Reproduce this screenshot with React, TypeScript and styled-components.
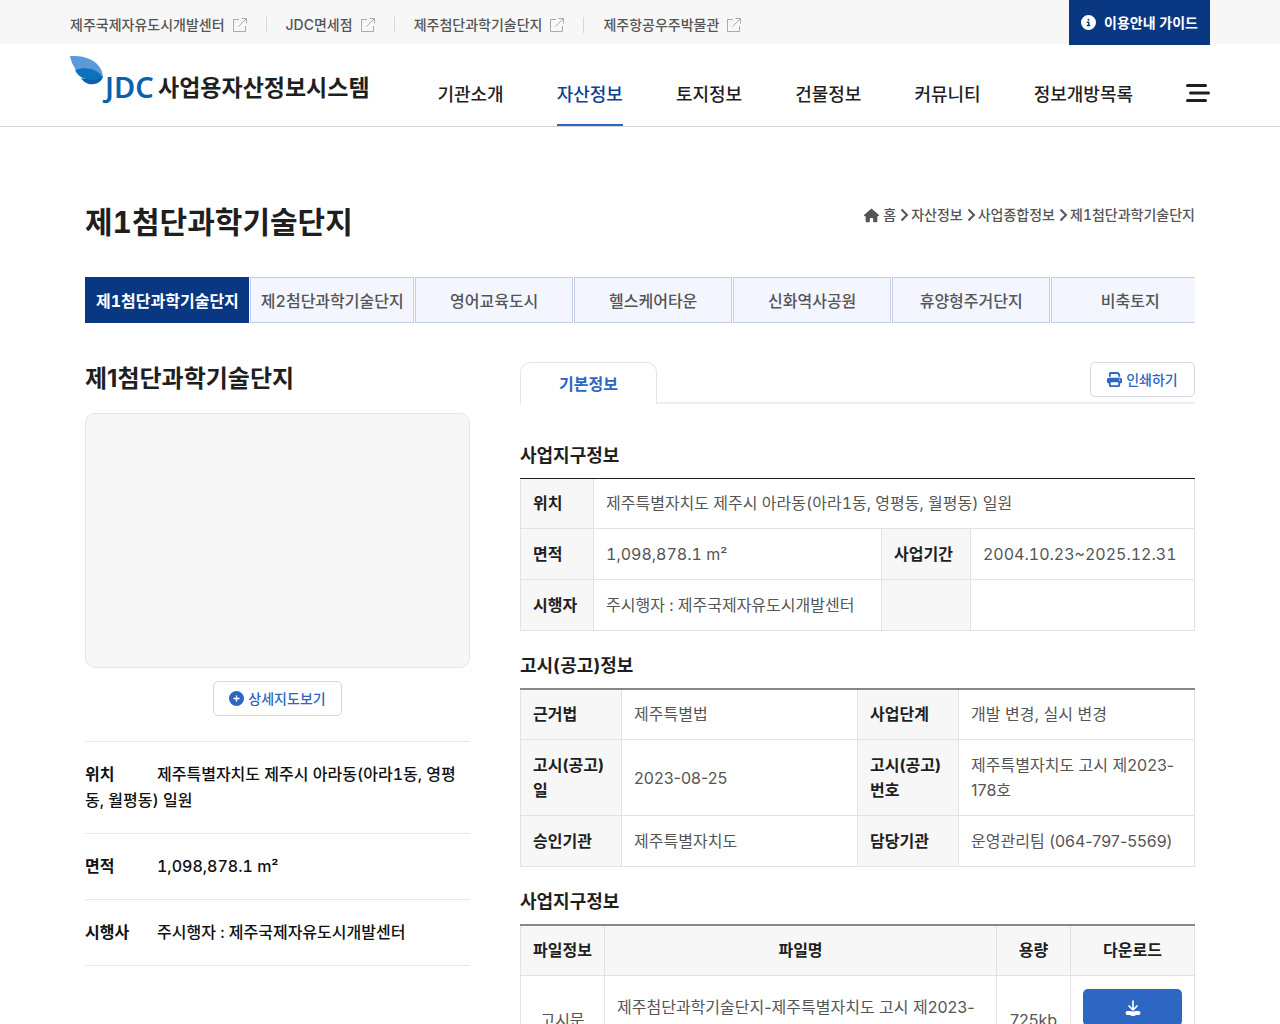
import React from 'react';
import styled, { createGlobalStyle, css } from 'styled-components';
import { FaCircleInfo, FaHouse, FaPrint, FaCirclePlus } from 'react-icons/fa6';

const GlobalStyle = createGlobalStyle`
  *, *::before, *::after { box-sizing: border-box; }
  body {
    margin: 0;
    background: #fff;
    color: #1f1f1f;
    font-family: Inter, "Noto Sans CJK KR", sans-serif;
    font-variant-numeric: tabular-nums;
    font-size: 16px;
    line-height: 26px;
  }
  h1, h2, h3, ul, ol, dl, dd, p { margin: 0; padding: 0; }
  ul, ol { list-style: none; }
  a { color: inherit; text-decoration: none; }
  button { font: inherit; cursor: pointer; }
`;

const Container = styled.div`
  max-width: 1140px;
  margin: 0 auto;
`;

const TopBar = styled.div`
  background: #f7f7f7;
  height: 44px;
`;

const TopBarInner = styled(Container)`
  display: flex;
  justify-content: space-between;
  align-items: flex-start;
`;

const FamilyLinks = styled.ul`
  display: flex;
  align-items: center;
  height: 50px;
`;

const FamilyItem = styled.li`
  display: flex;
  align-items: center;
  font-size: 14px;
  font-weight: 500;
  color: #555;

  & + &::before {
    content: '';
    width: 1px;
    height: 16px;
    margin: 0 19px;
    background: #d8d8d8;
  }

  a {
    display: flex;
    align-items: center;
    gap: 8px;
  }
`;

const GuideButton = styled.button`
  display: flex;
  align-items: center;
  gap: 8px;
  height: 45px;
  padding: 0 12px;
  border: 0;
  background: #0a3782;
  color: #fff;
  font-size: 14px;
  font-weight: 700;
`;

const Header = styled.header`
  border-bottom: 1px solid #d5d5d5;
`;

const HeaderInner = styled(Container)`
  display: flex;
  justify-content: space-between;
  height: 82px;
`;

const Logo = styled.a`
  display: flex;
  align-items: flex-start;
  gap: 4px;
  padding-top: 11px;
  font-size: 23px;
  font-weight: 700;
  line-height: 34px;
  white-space: nowrap;

  span { padding-top: 16px; }
`;

const LogoText = styled.text`
  font-family: "Noto Sans", "Open Sans", sans-serif;
  font-size: 29px;
  font-weight: 600;
  fill: #0961b2;
`;

const MainNav = styled.nav`
  display: flex;
  align-items: center;
  gap: 53px;

  ul {
    display: flex;
    gap: 53px;
    height: 100%;
  }
`;

const NavLink = styled.a<{ $active?: boolean }>`
  display: block;
  height: 82px;
  padding-top: 38px;
  font-size: 18px;
  font-weight: 500;
  white-space: nowrap;
  border-bottom: 2px solid transparent;
  ${(p) => p.$active && css`
    color: #0d3f95;
    border-bottom-color: #2d66c3;
  `}
`;

const MenuButton = styled.button`
  display: flex;
  margin-top: 16px;
  padding: 0;
  border: 0;
  background: none;
  color: #1f1f1f;
`;

const Main = styled.main`
  max-width: 1140px;
  margin: 0 auto;
  padding: 72px 15px 0;
`;

const TitleRow = styled.div`
  display: flex;
  justify-content: space-between;
  align-items: flex-start;
`;

const PageTitle = styled.h1`
  font-size: 30px;
  font-weight: 700;
  line-height: 46px;
`;

const Breadcrumb = styled.ol`
  display: flex;
  align-items: center;
  padding-top: 3px;
  color: #555;
  font-size: 14px;
  font-weight: 500;

  li {
    display: flex;
    align-items: center;
    gap: 4px;
  }

  li + li {
    gap: 2px;
    margin-left: 4px;
  }
`;

const DistrictTabs = styled.nav`
  display: flex;
  gap: 1px;
  margin-top: 32px;
  overflow: hidden;
`;

const DistrictTab = styled.a<{ $active?: boolean }>`
  flex: none;
  min-width: 158px;
  padding: 10px 9px 8px 10px;
  border: 1px solid #c5cde6;
  background: #f3f6fe;
  color: #555;
  font-weight: 500;
  text-align: center;
  white-space: nowrap;
  ${(p) => p.$active && css`
    border-color: #0a3782;
    background: #0a3782;
    color: #fff;
    font-weight: 700;
  `}
`;

const Columns = styled.div`
  display: grid;
  grid-template-columns: minmax(0, 385fr) minmax(0, 675fr);
  gap: 50px;
  margin-top: 39px;
`;

const SiteTitle = styled.h2`
  font-size: 24px;
  font-weight: 700;
  font-variant-numeric: normal;
  line-height: 34px;
`;

const MapBox = styled.div`
  height: 255px;
  margin-top: 17px;
  border: 1px solid #e5e5e5;
  border-radius: 10px;
  background: #f7f7f7;
`;

const OutlineButton = styled.button`
  display: inline-flex;
  align-items: center;
  justify-content: center;
  gap: 4px;
  min-width: 105px;
  height: 35px;
  padding: 0 15px;
  border: 1px solid #d5d8de;
  border-radius: 5px;
  background: #fff;
  color: #2d66c3;
  font-size: 14px;
  font-weight: 500;
`;

const Centered = styled.div`
  display: flex;
  justify-content: center;
  padding: 13px 0 25px;
`;

const FactList = styled.dl`
  border-top: 1px solid #e8e8e8;
`;

const Fact = styled.div`
  padding: 19px 0 20px;
  border-bottom: 1px solid #e8e8e8;
  color: #111;

  dt {
    display: inline-block;
    width: 72px;
    font-weight: 700;
  }

  dd {
    display: inline;
    font-weight: 500;
  }
`;

const PanelTabs = styled.div`
  display: flex;
  justify-content: space-between;
  align-items: flex-start;
  height: 42px;
  border-bottom: 2px solid #eee;
`;

const PanelTab = styled.button`
  width: 137px;
  height: 42px;
  border: 1px solid #e5e5e5;
  border-bottom: 0;
  border-radius: 10px 10px 0 0;
  background: #fff;
  color: #2d66c3;
  font-weight: 700;
`;

const Section = styled.section<{ $first?: boolean }>`
  padding-top: ${(p) => (p.$first ? 39 : 22)}px;
`;

const SectionTitle = styled.h3`
  margin-bottom: 9px;
  font-size: 18px;
  font-weight: 700;
  line-height: 26px;
`;

const TableFrame = styled.div<{ $strong?: boolean }>`
  border-top: ${(p) => (p.$strong ? '1px solid #1f1f1f' : '2px solid #888')};
`;

const DataTable = styled.table<{ $tabular?: boolean }>`
  width: 100%;
  table-layout: fixed;
  border-collapse: collapse;
  font-variant-numeric: ${(p) => (p.$tabular ? 'tabular-nums' : 'normal')};
  line-height: 25px;

  th, td {
    padding: 13px 12px 12px;
    border: 1px solid #e3e3e3;
    text-align: left;
  }

  > :nth-child(2) > tr:first-child > * {
    padding-top: 12px;
    border-top: 0;
  }

  th {
    background: #f7f7f7;
    font-weight: 700;
  }

  td { color: #555; }
`;

const FileTable = styled(DataTable)`
  th, td { text-align: center; }
  td:nth-child(2) { text-align: left; }
`;

const Col = styled.col<{ $w?: string }>`
  width: ${(p) => p.$w ?? 'auto'};
`;

const DownloadButton = styled.button`
  display: flex;
  align-items: center;
  justify-content: center;
  width: 100%;
  height: 37px;
  margin-bottom: 25px;
  border: 0;
  border-radius: 5px;
  background: #2d66c3;
  color: #fff;
`;

const ExternalIcon = () => (
  <svg width="14" height="14" viewBox="0 0 14 14" fill="none" stroke="#aaa" strokeWidth="1" aria-hidden="true">
    <path d="M6 1.5H.5v12h12V8M8.5.5h5v5M13.5.5 5.5 8.5" />
  </svg>
);

const ChevronIcon = () => (
  <svg width="9" height="14" viewBox="0 0 9 14" fill="none" stroke="currentColor" strokeWidth="2" aria-hidden="true">
    <path d="m1.5 1.5 5.5 5.5-5.5 5.5" />
  </svg>
);

const MenuIcon = () => (
  <svg width="24" height="20" viewBox="0 0 24 20" fill="none" stroke="currentColor" strokeWidth="3" strokeLinecap="round" aria-hidden="true">
    <path d="M1.5 2.5h18M4.5 10h18M1.5 17.5h18" />
  </svg>
);

const DownloadIcon = () => (
  <svg width="16" height="16" viewBox="0 0 16 16" fill="none" stroke="currentColor" strokeLinecap="round" strokeLinejoin="round" aria-hidden="true">
    <path d="M8 1v8.500M4 6l4 4 4-4" strokeWidth="1.700" />
    <path d="M2.500 13h2.500l3 1 3-1h2.500" strokeWidth="4" />
  </svg>
);

const LogoMark = () => (
  <svg width="84" height="52" viewBox="0 0 84 52" role="img" aria-label="JDC">
    <path d="M0 1C14 0 31 5 33 21C25 15 16 13 6 15C3 11 1 6 0 1Z" fill="#5b9ad8" />
    <path d="M11 23C19 25 27 24 33 21C32 30 17 33 11 23Z" fill="#0d5fae" />
    <path d="M5 15C16 11 27 14 33 22C24 27 10 26 5 15Z" fill="#0b72bd" />
    <LogoText x="35" y="43">JDC</LogoText>
  </svg>
);

const FAMILY = ['제주국제자유도시개발센터', 'JDC면세점', '제주첨단과학기술단지', '제주항공우주박물관'];
const NAV = ['기관소개', '자산정보', '토지정보', '건물정보', '커뮤니티', '정보개방목록'];
const CRUMBS = ['자산정보', '사업종합정보', '제1첨단과학기술단지'];
const DISTRICTS = ['제1첨단과학기술단지', '제2첨단과학기술단지', '영어교육도시', '헬스케어타운', '신화역사공원', '휴양형주거단지', '비축토지'];
const FACTS = [
  ['위치', '제주특별자치도 제주시 아라동(아라1동, 영평동, 월평동) 일원'],
  ['면적', '1,098,878.1 m²'],
  ['시행사', '주시행자 : 제주국제자유도시개발센터'],
];
const NOTICES = [
  ['근거법', '제주특별법', '사업단계', '개발 변경, 실시 변경'],
  ['고시(공고)일', '2023-08-25', '고시(공고)번호', '제주특별자치도 고시 제2023-178호'],
  ['승인기관', '제주특별자치도', '담당기관', '운영관리팀 (064-797-5569)'],
];

export default function App() {
  return (
    <>
      <GlobalStyle />
      <TopBar>
        <TopBarInner>
          <FamilyLinks>
            {FAMILY.map((name) => (
              <FamilyItem key={name}>
                <a href="#family">{name}<ExternalIcon /></a>
              </FamilyItem>
            ))}
          </FamilyLinks>
          <GuideButton type="button"><FaCircleInfo size={15} />이용안내 가이드</GuideButton>
        </TopBarInner>
      </TopBar>

      <Header>
        <HeaderInner>
          <Logo href="#home"><LogoMark /><span>사업용자산정보시스템</span></Logo>
          <MainNav>
            <ul>
              {NAV.map((name) => (
                <li key={name}><NavLink href="#menu" $active={name === '자산정보'}>{name}</NavLink></li>
              ))}
            </ul>
            <MenuButton type="button" aria-label="전체메뉴"><MenuIcon /></MenuButton>
          </MainNav>
        </HeaderInner>
      </Header>

      <Main>
        <TitleRow>
          <PageTitle>제1첨단과학기술단지</PageTitle>
          <Breadcrumb>
            <li><FaHouse size={15} /><a href="#home">홈</a></li>
            {CRUMBS.map((name) => (
              <li key={name}><ChevronIcon /><a href="#crumb">{name}</a></li>
            ))}
          </Breadcrumb>
        </TitleRow>

        <DistrictTabs>
          {DISTRICTS.map((name, i) => (
            <DistrictTab key={name} href="#district" $active={i === 0}>{name}</DistrictTab>
          ))}
        </DistrictTabs>

        <Columns>
          <div>
            <SiteTitle>제1첨단과학기술단지</SiteTitle>
            <MapBox />
            <Centered>
              <OutlineButton type="button"><FaCirclePlus size={15} />상세지도보기</OutlineButton>
            </Centered>
            <FactList>
              {FACTS.map(([label, value]) => (
                <Fact key={label}><dt>{label}</dt><dd>{value}</dd></Fact>
              ))}
            </FactList>
          </div>

          <div>
            <PanelTabs>
              <PanelTab type="button">기본정보</PanelTab>
              <OutlineButton type="button"><FaPrint size={15} />인쇄하기</OutlineButton>
            </PanelTabs>

            <Section $first>
              <SectionTitle>사업지구정보</SectionTitle>
              <TableFrame $strong>
                <DataTable $tabular>
                  <colgroup><Col $w="73px" /><Col /><Col $w="89px" /><Col $w="224px" /></colgroup>
                  <tbody>
                    <tr><th scope="row">위치</th><td colSpan={3}>제주특별자치도 제주시 아라동(아라1동, 영평동, 월평동) 일원</td></tr>
                    <tr><th scope="row">면적</th><td>1,098,878.1 m²</td><th scope="row">사업기간</th><td>2004.10.23~2025.12.31</td></tr>
                    <tr><th scope="row">시행자</th><td>주시행자 : 제주국제자유도시개발센터</td><th /><td /></tr>
                  </tbody>
                </DataTable>
              </TableFrame>
            </Section>

            <Section>
              <SectionTitle>고시(공고)정보</SectionTitle>
              <TableFrame>
                <DataTable>
                  <colgroup><Col $w="15%" /><Col $w="35%" /><Col $w="15%" /><Col $w="35%" /></colgroup>
                  <tbody>
                    {NOTICES.map(([a, b, c, d]) => (
                      <tr key={a}><th scope="row">{a}</th><td>{b}</td><th scope="row">{c}</th><td>{d}</td></tr>
                    ))}
                  </tbody>
                </DataTable>
              </TableFrame>
            </Section>

            <Section>
              <SectionTitle>사업지구정보</SectionTitle>
              <TableFrame>
                <FileTable>
                  <colgroup><Col $w="84px" /><Col /><Col $w="74px" /><Col $w="124px" /></colgroup>
                  <thead>
                    <tr><th scope="col">파일정보</th><th scope="col">파일명</th><th scope="col">용량</th><th scope="col">다운로드</th></tr>
                  </thead>
                  <tbody>
                    <tr>
                      <td>고시문</td>
                      <td>제주첨단과학기술단지-제주특별자치도 고시 제2023-178호</td>
                      <td>725kb</td>
                      <td><DownloadButton type="button" aria-label="다운로드"><DownloadIcon /></DownloadButton></td>
                    </tr>
                  </tbody>
                </FileTable>
              </TableFrame>
            </Section>
          </div>
        </Columns>
      </Main>
    </>
  );
}
